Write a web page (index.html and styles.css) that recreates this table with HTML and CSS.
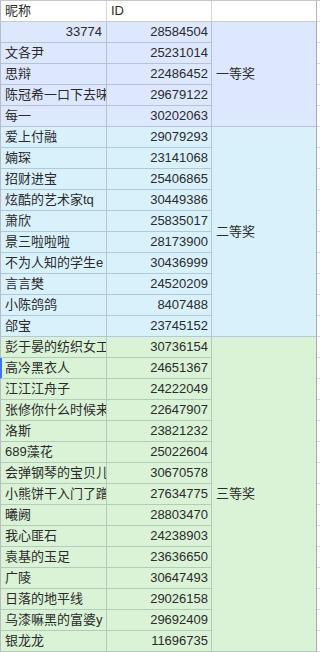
FILE: index.html
```html
<!DOCTYPE html>
<html lang="zh-CN">
<head>
<meta charset="utf-8">
<title>获奖名单</title>
<link rel="stylesheet" href="styles.css">
</head>
<body>
<div class="sheet">
  <div class="c1 head">昵称</div><div class="c2 head left">ID</div><div class="c3 head"></div><div class="c4"></div>

  <div class="c1 g1 num">33774</div><div class="c2 g1">28584504</div><div class="c3 g1 prize span5">一等奖</div><div class="c4"></div>
  <div class="c1 g1">文各尹</div><div class="c2 g1">25231014</div><div class="c4"></div>
  <div class="c1 g1">思辩</div><div class="c2 g1">22486452</div><div class="c4"></div>
  <div class="c1 g1">陈冠希一口下去味道</div><div class="c2 g1">29679122</div><div class="c4"></div>
  <div class="c1 g1">每一</div><div class="c2 g1">30202063</div><div class="c4"></div>

  <div class="c1 g2">爱上付融</div><div class="c2 g2">29079293</div><div class="c3 g2 prize span10">二等奖</div><div class="c4"></div>
  <div class="c1 g2">婻琛</div><div class="c2 g2">23141068</div><div class="c4"></div>
  <div class="c1 g2">招财进宝</div><div class="c2 g2">25406865</div><div class="c4"></div>
  <div class="c1 g2">炫酷的艺术家tq</div><div class="c2 g2">30449386</div><div class="c4"></div>
  <div class="c1 g2">萧欣</div><div class="c2 g2">25835017</div><div class="c4"></div>
  <div class="c1 g2">景三啦啦啦</div><div class="c2 g2">28173900</div><div class="c4"></div>
  <div class="c1 g2">不为人知的学生e</div><div class="c2 g2">30436999</div><div class="c4"></div>
  <div class="c1 g2">言言樊</div><div class="c2 g2">24520209</div><div class="c4"></div>
  <div class="c1 g2">小陈鸽鸽</div><div class="c2 g2">8407488</div><div class="c4"></div>
  <div class="c1 g2">郃宝</div><div class="c2 g2">23745152</div><div class="c4"></div>

  <div class="c1 g3">彭于晏的纺织女工</div><div class="c2 g3">30736154</div><div class="c3 g3 prize span15">三等奖</div><div class="c4"></div>
  <div class="c1 g3 marked">高冷黑衣人</div><div class="c2 g3">24651367</div><div class="c4"></div>
  <div class="c1 g3">江江江舟子</div><div class="c2 g3">24222049</div><div class="c4"></div>
  <div class="c1 g3">张修你什么时候来</div><div class="c2 g3">22647907</div><div class="c4"></div>
  <div class="c1 g3">洛斯</div><div class="c2 g3">23821232</div><div class="c4"></div>
  <div class="c1 g3">689藻花</div><div class="c2 g3">25022604</div><div class="c4"></div>
  <div class="c1 g3">会弹钢琴的宝贝儿</div><div class="c2 g3">30670578</div><div class="c4"></div>
  <div class="c1 g3">小熊饼干入门了蹭</div><div class="c2 g3">27634775</div><div class="c4"></div>
  <div class="c1 g3">曦阙</div><div class="c2 g3">28803470</div><div class="c4"></div>
  <div class="c1 g3">我心匪石</div><div class="c2 g3">24238903</div><div class="c4"></div>
  <div class="c1 g3">袁基的玉足</div><div class="c2 g3">23636650</div><div class="c4"></div>
  <div class="c1 g3">广陵</div><div class="c2 g3">30647493</div><div class="c4"></div>
  <div class="c1 g3">日落的地平线</div><div class="c2 g3">29026158</div><div class="c4"></div>
  <div class="c1 g3">乌漆嘛黑的富婆y</div><div class="c2 g3">29692409</div><div class="c4"></div>
  <div class="c1 g3">银龙龙</div><div class="c2 g3">11696735</div><div class="c4"></div>
</div>
</body>
</html>
```

FILE: styles.css
```css
html, body {
  margin: 0;
  padding: 0;
  background: #ffffff;
}

.sheet {
  display: grid;
  grid-template-columns: 107px 105px 105px 3px;
  grid-auto-rows: 21px;
  width: 320px;
  border-top: 1px solid #c4c7cc;
  font-family: "Liberation Sans", "Noto Sans CJK SC", sans-serif;
  font-size: 13px;
  color: #2b2b2b;
}

.sheet > div {
  box-sizing: border-box;
  line-height: 20px;
  white-space: nowrap;
  overflow: hidden;
  border-bottom: 1px solid rgba(50, 60, 90, 0.22);
  border-right: 1px solid rgba(50, 60, 90, 0.22);
}

.c1 {
  grid-column: 1;
  padding-left: 4px;
  border-left: 1px solid #b9bcc2;
}

.c2 {
  grid-column: 2;
  text-align: right;
  padding-right: 3px;
}

.c3 {
  grid-column: 3;
  padding-left: 4px;
}

.sheet > .c3 {
  border-right: 1px solid #a9acb4;
}

.sheet > .c4 {
  grid-column: 4;
  border-right: none;
  border-bottom: 1px solid #dadada;
  background: #ffffff;
}

.sheet > .head {
  background: #ffffff;
  border-bottom-color: #c9ccd2;
  border-right-color: #d6d8dc;
}

.sheet > .c3.head {
  border-right-color: #b4b6bb;
}

.head.left {
  text-align: left;
  padding-left: 4px;
}

.num {
  text-align: right;
  padding-right: 4px;
}

.g1 { background: #dde7fd; }
.g2 { background: #d8f1fb; }
.g3 { background: #daf3d6; }

.prize {
  display: flex;
  align-items: center;
}

.span5 { grid-row: span 5; }
.span10 { grid-row: span 10; }
.span15 { grid-row: span 15; }

.sheet > .marked {
  border-left: 1px solid #3b78e7;
  box-shadow: inset 1px 0 0 #3b78e7;
}
```
